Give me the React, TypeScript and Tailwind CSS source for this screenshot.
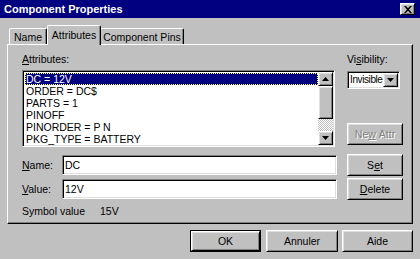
import React from "react";

const raised =
  "border border-t-white border-l-white border-r-black border-b-black shadow-[inset_1px_1px_0_#dfdfdf,inset_-1px_-1px_0_#808080]";
const sunken =
  "border border-t-[#808080] border-l-[#808080] border-r-white border-b-white shadow-[inset_1px_1px_0_#000,inset_-1px_-1px_0_#dfdfdf]";

const attributes = [
  "DC = 12V",
  "ORDER = DC$",
  "PARTS = 1",
  "PINOFF",
  "PINORDER = P N",
  "PKG_TYPE = BATTERY",
];

function Arrow({ down }: { down?: boolean }) {
  return (
    <svg width="7" height="4" viewBox="0 0 7 4">
      <path d={down ? "M0 0h7L3.5 4z" : "M0 4h7L3.5 0z"} fill="#000" />
    </svg>
  );
}

function Button({
  children,
  className = "",
  disabled,
}: {
  children: React.ReactNode;
  className?: string;
  disabled?: boolean;
}) {
  return (
    <div
      className={`flex items-center justify-center bg-[#c0c0c0] ${raised} ${
        disabled ? "text-[#808080] [text-shadow:1px_1px_0_#fff]" : "text-black"
      } ${className}`}
    >
      {children}
    </div>
  );
}

export default function App() {
  return (
    <div className="w-[420px] h-[259px] bg-[#c0c0c0] font-['Liberation_Sans',Arial,sans-serif] text-[10.5px] leading-[12px] text-black overflow-hidden select-none">
      {/* title bar */}
      <div className="h-[18px] bg-[#000080] flex items-center justify-between pl-[4px] pr-[5px]">
        <span className="text-white font-bold text-[11px]">Component Properties</span>
        <div className={`w-[15px] h-[12px] bg-[#c0c0c0] flex items-center justify-center ${raised}`}>
          <svg width="8" height="7" viewBox="0 0 8 7">
            <path d="M0 0h2l2 2.2L6 0h2L5 3.5 8 7H6L4 4.8 2 7H0l3-3.5z" fill="#000" />
          </svg>
        </div>
      </div>

      {/* tabs */}
      <div className="h-[26px] flex items-end pl-[9px]">
        <div className="w-[38px] h-[16px] border-t border-l border-white border-r border-r-black shadow-[inset_-1px_0_0_#808080] rounded-tl-[2px] rounded-tr-[2px] flex items-center justify-center">
          Name
        </div>
        <div className="relative z-10 -mb-px w-[54px] h-[20px] bg-[#c0c0c0] border-t border-l border-white border-r border-r-black shadow-[inset_-1px_0_0_#808080] rounded-tl-[2px] rounded-tr-[2px] flex items-start justify-center pt-[3px]">
          Attributes
        </div>
        <div className="w-[83px] h-[16px] border-t border-white border-r border-r-black shadow-[inset_-1px_0_0_#808080] rounded-tr-[2px] flex items-center justify-center">
          Component Pins
        </div>
      </div>

      {/* panel */}
      <div className="mx-[7px] h-[180px] border border-t-white border-l-white border-r-black border-b-black shadow-[inset_-1px_-1px_0_#808080] flex pl-[14px]">
        {/* left column */}
        <div className="w-[315px] flex flex-col pt-[7px]">
          <div className="h-[13px] flex items-center">
            <span>
              <span className="underline">A</span>ttributes:
            </span>
          </div>
          <div className={`mt-[5px] w-[313px] h-[77px] bg-white flex p-px ${sunken}`}>
            <div className="flex-1 flex flex-col overflow-hidden pl-px pt-px">
              {attributes.map((a, i) => (
                <div
                  key={a}
                  className={`h-[12px] shrink-0 flex items-center px-[1px] whitespace-nowrap ${
                    i === 0
                      ? "bg-[#000080] text-white outline-1 outline-dotted outline-[#ffff60] -outline-offset-1"
                      : ""
                  }`}
                >
                  {a}
                </div>
              ))}
            </div>
            {/* scrollbar */}
            <div className="w-[15px] flex flex-col">
              <Button className="h-[14px]">
                <Arrow />
              </Button>
              <div className={`h-[33px] bg-[#c0c0c0] ${raised}`} />
              <div className="flex-1 bg-[image:repeating-conic-gradient(#c0c0c0_0_25%,#ffffff_0_50%)] bg-[length:2px_2px]" />
              <Button className="h-[14px]">
                <Arrow down />
              </Button>
            </div>
          </div>

          <div className="mt-[8px] h-[20px] flex items-center">
            <span className="w-[40px]">
              <span className="underline">N</span>ame:
            </span>
            <div className={`w-[275px] h-[20px] bg-white flex items-center pl-[2px] ${sunken}`}>DC</div>
          </div>
          <div className="mt-[4px] h-[20px] flex items-center">
            <span className="w-[40px]">
              <span className="underline">V</span>alue:
            </span>
            <div className={`w-[275px] h-[20px] bg-white flex items-center pl-[2px] ${sunken}`}>12V</div>
          </div>
          <div className="mt-[5px] h-[13px] flex items-center">
            <span className="w-[78px]">Symbol value</span>
            <span>15V</span>
          </div>
        </div>

        {/* right column */}
        <div className="ml-[10px] w-[56px] flex flex-col pt-[7px]">
          <div className="h-[13px] flex items-center">
            <span>
              Vi<span className="underline">s</span>ibility:
            </span>
          </div>
          <div className={`mt-[6px] w-[53px] h-[18px] bg-white flex p-px ${sunken}`}>
            <div className="flex-1 min-w-0 flex items-center pl-[1px] text-[10px] tracking-[-0.4px] whitespace-nowrap">
              Invisible
            </div>
            <Button className="w-[15px] shrink-0">
              <Arrow down />
            </Button>
          </div>
          <Button disabled className="mt-[34px] h-[22px]">
            Ne<span className="underline">w</span>&nbsp;Attr
          </Button>
          <Button className="mt-[9px] h-[22px]">
            S<span className="underline">e</span>t
          </Button>
          <Button className="mt-[2px] h-[22px]">
            <span className="underline">D</span>elete
          </Button>
        </div>
      </div>

      {/* bottom buttons */}
      <div className="mt-[6px] flex justify-end pr-[7px]">
        <div className="w-[71px] h-[22px] border border-black">
          <Button className="h-full">OK</Button>
        </div>
        <Button className="ml-[5px] w-[72px] h-[22px]">Annuler</Button>
        <Button className="ml-[4px] w-[71px] h-[22px]">Aide</Button>
      </div>
    </div>
  );
}
